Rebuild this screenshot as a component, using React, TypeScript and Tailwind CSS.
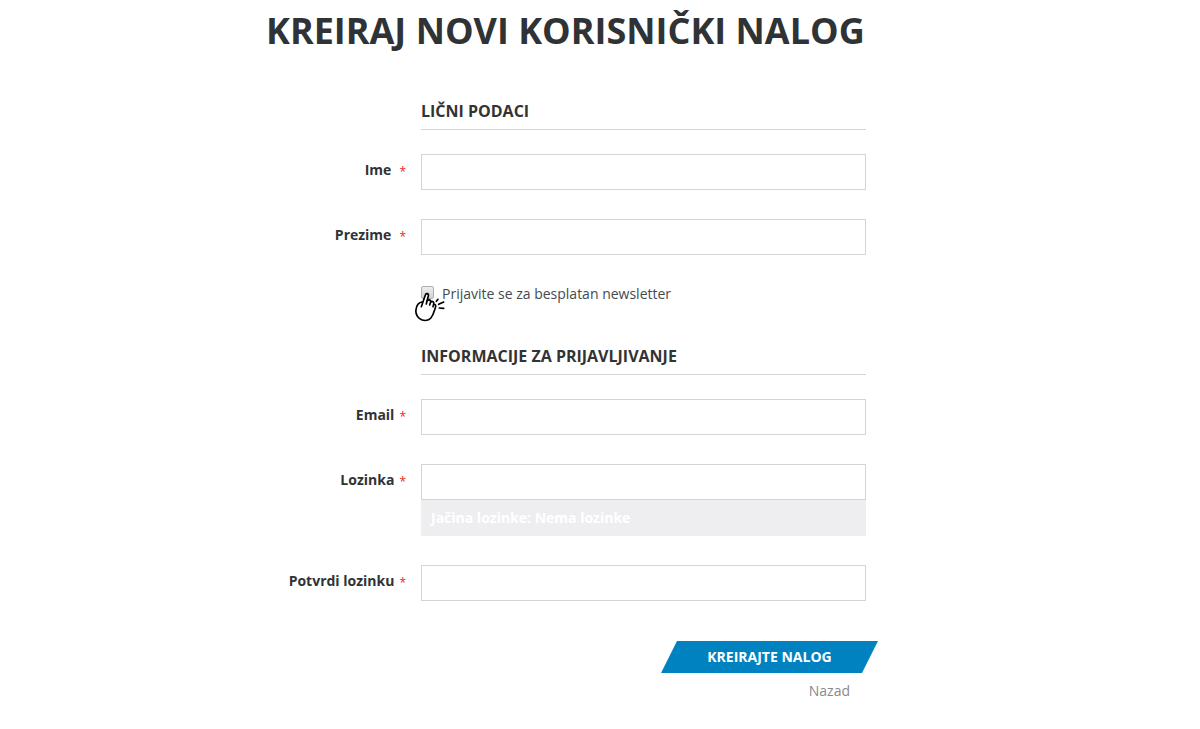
import { useState } from "react";

interface FieldProps {
  id: string;
  label: string;
  type?: string;
  labelGap?: string;
  children?: React.ReactNode;
}

const rowCls = "grid grid-cols-[155px_1fr]";
const headingCls =
  "ml-[155px] border-b border-[#d5d5d5] pb-2 text-base leading-5 font-bold text-[#333333]";

function Field({ id, label, type = "text", labelGap = "gap-[5px]", children }: FieldProps) {
  return (
    <div className={rowCls}>
      <label
        htmlFor={id}
        className={`flex h-8 items-center justify-end pr-[15px] text-sm font-bold text-[#303336] ${labelGap}`}
      >
        {label}
        <span className="pt-[3px] text-xs font-normal text-[#f01c1c]">*</span>
      </label>
      <div>
        <input
          id={id}
          name={id}
          type={type}
          required
          className="block h-9 w-full border border-[#d5d5d5] bg-white px-2 text-sm focus:outline-none focus:border-[#0082c0]"
        />
        {children}
      </div>
    </div>
  );
}

function TapCursor() {
  return (
    <svg
      viewBox="0 0 120 120"
      className="pointer-events-none absolute -left-[11px] top-0 size-10"
      fill="none"
      stroke="#000"
      strokeWidth="5"
      strokeLinecap="round"
      strokeLinejoin="round"
      aria-hidden="true"
    >
      <path
        fill="#fff"
        d="M34 68 L46 33 C48 26 57 28 55 36 L51 51 C55 45 63 47 62 54 C67 50 73 54 71 61 C76 60 79 65 76 71 C72 82 71 92 62 103 C55 112 38 111 28 103 C19 95 16 82 19 72 C21 63 25 56 36 54"
      />
      <path d="M51 51 L49 60 M62 54 L59 63 M71 61 L69 68" />
      <path d="M79 52 L84 46 M86 61 L101 54 M88 72 L101 73" />
    </svg>
  );
}

export default function App() {
  const [newsletter, setNewsletter] = useState(false);

  return (
    <main className="bg-white px-4 pb-7 font-['Open_Sans','Noto_Sans',sans-serif] lg:pr-[84px]">
      <div className="mx-auto max-w-[600px]">
        <h1 className="pt-1 text-4xl leading-[54px] font-bold whitespace-nowrap text-[#303336]">
          KREIRAJ NOVI KORISNIČKI NALOG
        </h1>

        <form onSubmit={(e) => e.preventDefault()} className="pt-[43px]">
          <section>
            <h2 className={headingCls}>LIČNI PODACI</h2>
            <div className="flex flex-col gap-[29px] pt-6">
              <Field id="firstname" label="Ime" labelGap="gap-2" />
              <Field id="lastname" label="Prezime" labelGap="gap-2" />
              <div className="relative ml-[155px] flex h-5 items-center gap-2">
                <input
                  id="newsletter"
                  type="checkbox"
                  checked={newsletter}
                  onChange={(e) => setNewsletter(e.target.checked)}
                  className="mb-1 size-[13px] appearance-none rounded-xs border border-[#b0b0b0] bg-linear-to-b from-[#ececec] to-[#d4d4d4] checked:from-[#0082c0] checked:to-[#0082c0]"
                />
                <label htmlFor="newsletter" className="text-sm text-[#444a50]">
                  Prijavite se za besplatan newsletter
                </label>
                <TapCursor />
              </div>
            </div>
          </section>

          <section className="pt-[42px]">
            <h2 className={headingCls}>INFORMACIJE ZA PRIJAVLJIVANJE</h2>
            <div className="flex flex-col gap-[29px] pt-6">
              <Field id="email" label="Email" type="email" />
              <Field id="password" label="Lozinka" type="password">
                <div className="flex h-9 items-center bg-[#eeeef0] px-[10px] text-sm font-bold text-white">
                  Jačina lozinke: Nema lozinke
                </div>
              </Field>
              <Field id="password-confirm" label="Potvrdi lozinku" type="password" />
            </div>
          </section>

          <div className="-mr-3 flex flex-col items-end pt-10">
            <button
              type="submit"
              className="h-8 w-[217px] cursor-pointer bg-[#0082c0] text-sm font-bold text-white [clip-path:polygon(16px_0,100%_0,calc(100%-16px)_100%,0_100%)]"
            >
              KREIRAJTE NALOG
            </button>
            <a href="#" className="mr-7 pt-2 text-sm text-[#8a8a8a]">
              Nazad
            </a>
          </div>
        </form>
      </div>
    </main>
  );
}
